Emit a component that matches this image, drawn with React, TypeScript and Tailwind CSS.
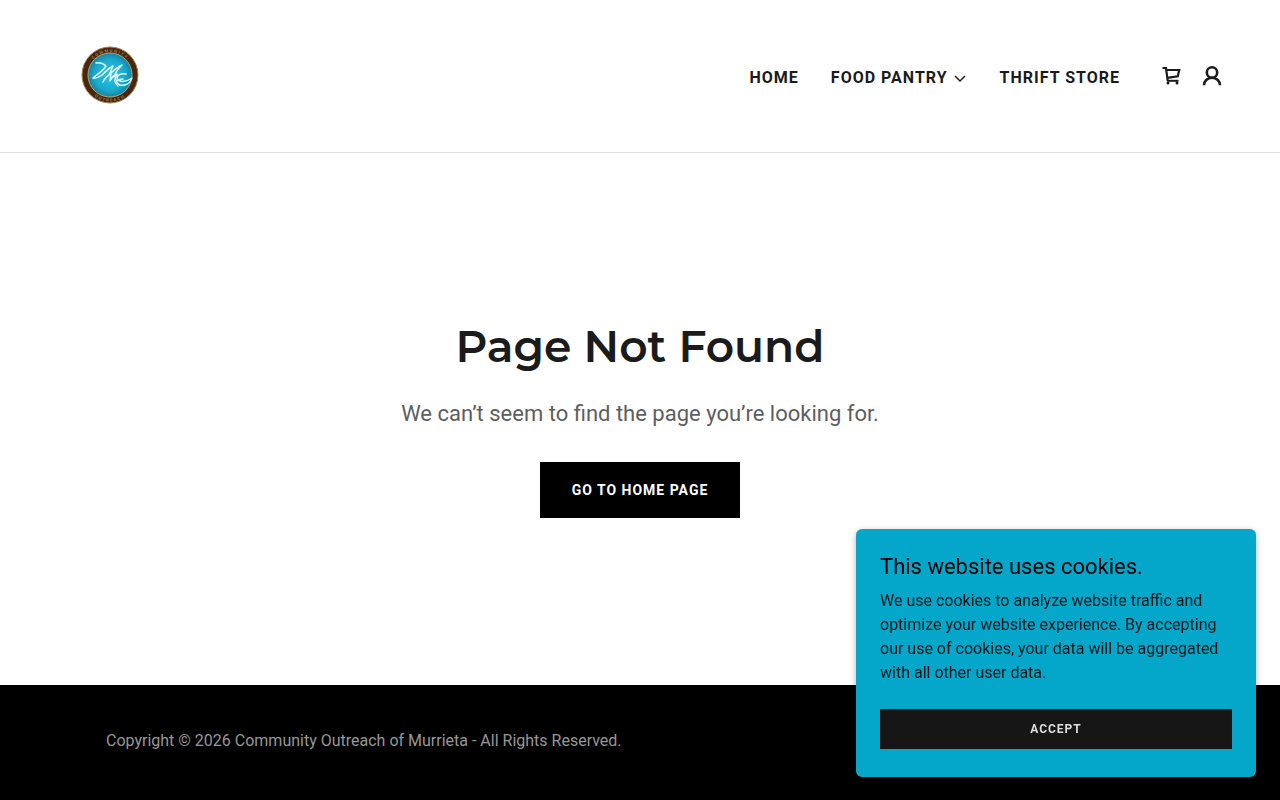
function Logo() {
  return (
    <svg viewBox="0 0 60 60" className="size-15" role="img" aria-label="Community Outreach of Murrieta">
      <defs>
        <radialGradient id="disc">
          <stop offset="0" stopColor="#25c3e2" />
          <stop offset="0.7" stopColor="#1ba9cc" />
          <stop offset="1" stopColor="#0f87a8" />
        </radialGradient>
        <path id="arc-top" d="M7 30a23 23 0 0 1 46 0" />
        <path id="arc-bottom" d="M3.500 30a26.500 26.500 0 0 0 53 0" />
      </defs>
      <circle cx="30" cy="30" r="28" fill="#4a2710" stroke="#a5804e" strokeWidth="1" />
      <circle cx="30" cy="30" r="22" fill="url(#disc)" stroke="#b9a678" strokeWidth="1" />
      <g fill="#a37c4c" fontFamily="Roboto, sans-serif" fontSize="4" fontWeight="700" textAnchor="middle">
        <text letterSpacing="1.500">
          <textPath href="#arc-top" startOffset="50%">COMMUNITY</textPath>
        </text>
        <text letterSpacing="1.500">
          <textPath href="#arc-bottom" startOffset="50%">OUTREACH</textPath>
        </text>
      </g>
      <g fill="none" stroke="#dff8fc" strokeLinecap="round" strokeLinejoin="round">
        <path strokeWidth="1.500" d="M16 18c4-1 7 0 10 3-3 5-8 8-13 12 3 1 6-1 9-3 3-3 7-7 11-9l-4 9c4-4 8-8 13-10-4 4-7 8-8 12" />
        <path strokeWidth="1.500" d="M23 37c2-4 5-7 8-8l-1 7c2-4 4-6 7-7-3 5-3 9 1 12" />
        <path strokeWidth="1.500" d="M46 29c-5-1-9 1-9 4 1 4 8 5 15 0-2 6-7 8-12 7-3-1-4-3-3-5l6-1" />
      </g>
    </svg>
  );
}

function CartIcon() {
  return (
    <svg viewBox="0 0 24 24" className="size-6" fill="none" stroke="currentColor" aria-hidden="true">
      <path strokeWidth="2.200" d="M2.500 4h3.500l1.700 12.800M6.500 6h12.700l-1.400 6.300-10.500 1.500" />
      <path strokeWidth="2" d="M7 16.800h11.500" />
      <circle cx="8" cy="19" r="1.500" fill="currentColor" stroke="none" />
      <circle cx="17" cy="19" r="1.500" fill="currentColor" stroke="none" />
    </svg>
  );
}

function AccountIcon() {
  return (
    <svg viewBox="0 0 24 24" className="size-6" fill="none" stroke="currentColor" strokeWidth="2.600" aria-hidden="true">
      <circle cx="12" cy="8.500" r="5.200" />
      <path d="M4 21.300c0-4 3.200-7.600 8-7.600s8 3.600 8 7.600" />
    </svg>
  );
}

function Header() {
  return (
    <header className="flex h-[153px] items-center justify-between border-b border-[#e2e2e2] pr-14 pl-20">
      <a href="/" className="pb-0.5">
        <Logo />
      </a>
      <div className="flex items-center gap-10">
        <nav className="flex items-center gap-8 pt-1 text-base font-bold tracking-[1px]">
          <a href="/">HOME</a>
          <button type="button" className="flex items-center gap-1">
            FOOD PANTRY
            <svg viewBox="0 0 16 16" className="size-4" fill="none" stroke="currentColor" strokeWidth="1.500" aria-hidden="true">
              <path d="M3 6l5 5 5-5" />
            </svg>
          </button>
          <a href="/thrift-store">THRIFT STORE</a>
        </nav>
        <div className="flex items-center gap-4">
          <button type="button" aria-label="Shopping cart">
            <CartIcon />
          </button>
          <button type="button" aria-label="Account">
            <AccountIcon />
          </button>
        </div>
      </div>
    </header>
  );
}

function CookieBanner() {
  return (
    <section
      aria-label="Cookie notice"
      className="fixed right-6 bottom-[23px] w-[400px] max-w-full rounded-md bg-[#04a7ca] px-6 pt-[22px] pb-7 shadow-[0_2px_6px_rgba(0,0,0,0.3)]"
    >
      <h2 className="mb-1.5 text-[22px] leading-8 text-black">This website uses cookies.</h2>
      <p className="text-base text-[#06181c]">
        We use cookies to analyze website traffic and optimize your website experience. By accepting our use of
        cookies, your data will be aggregated with all other user data.
      </p>
      <button type="button" className="mt-6 h-10 w-full bg-[#161616] text-xs font-bold tracking-[1px] text-[#dcdcdc]">
        ACCEPT
      </button>
    </section>
  );
}

export default function App() {
  return (
    <div className="flex min-h-screen flex-col bg-white font-[Roboto,sans-serif] text-[#1b1b1b]">
      <Header />
      <main className="flex grow flex-col items-center justify-center px-6 pb-0.5 text-center">
        <h1 className="font-[Montserrat,Inter,sans-serif] text-[44px] leading-14 font-semibold">Page Not Found</h1>
        <p className="mt-6 text-[22px] leading-8 text-[#5e5e5e]">We can’t seem to find the page you’re looking for.</p>
        <a
          href="/"
          className="mt-8 flex h-14 items-center bg-black px-8 text-sm font-bold tracking-[1px] text-white"
        >
          GO TO HOME PAGE
        </a>
      </main>
      <footer className="flex h-[115px] items-center bg-black px-[106px] pb-1 text-base text-[#979797]">
        <p>Copyright © 2026 Community Outreach of Murrieta - All Rights Reserved.</p>
      </footer>
      <CookieBanner />
    </div>
  );
}
